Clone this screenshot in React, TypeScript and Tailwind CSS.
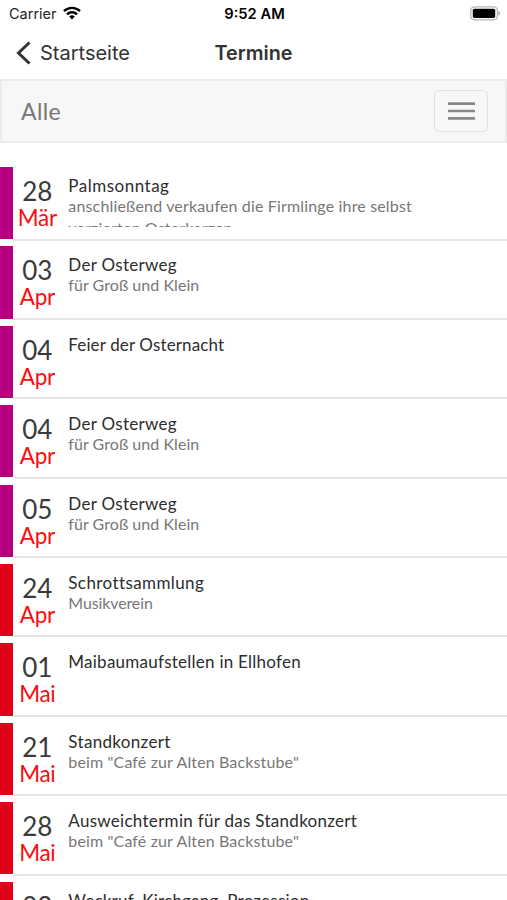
type Termin = {
  day: string;
  month: string;
  title: string;
  titleClass: string;
  text?: string;
  textClass?: string;
  bar: string;
};

const PURPLE = "bg-[#b5007f]";
const RED = "bg-[#e2001a]";

const termine: Termin[] = [
  { day: "28", month: "Mär", title: "Palmsonntag", titleClass: "tracking-[0.5px]", text: "anschließend verkaufen die Firmlinge ihre selbst verzierten Osterkerzen", textClass: "tracking-[0.16px]", bar: PURPLE },
  { day: "03", month: "Apr", title: "Der Osterweg", titleClass: "tracking-[0.3px]", text: "für Groß und Klein", textClass: "tracking-[0.05px]", bar: PURPLE },
  { day: "04", month: "Apr", title: "Feier der Osternacht", titleClass: "tracking-[0.13px]", bar: PURPLE },
  { day: "04", month: "Apr", title: "Der Osterweg", titleClass: "tracking-[0.3px]", text: "für Groß und Klein", textClass: "tracking-[0.05px]", bar: PURPLE },
  { day: "05", month: "Apr", title: "Der Osterweg", titleClass: "tracking-[0.3px]", text: "für Groß und Klein", textClass: "tracking-[0.05px]", bar: PURPLE },
  { day: "24", month: "Apr", title: "Schrottsammlung", titleClass: "tracking-[0.4px]", text: "Musikverein", textClass: "tracking-[-0.12px]", bar: RED },
  { day: "01", month: "Mai", title: "Maibaumaufstellen in Ellhofen", titleClass: "tracking-[0.25px]", bar: RED },
  { day: "21", month: "Mai", title: "Standkonzert", titleClass: "tracking-[0.33px]", text: 'beim "Café zur Alten Backstube"', textClass: "tracking-[0.14px]", bar: RED },
  { day: "28", month: "Mai", title: "Ausweichtermin für das Standkonzert", titleClass: "tracking-[0.29px]", text: 'beim "Café zur Alten Backstube"', textClass: "tracking-[0.14px]", bar: RED },
  { day: "03", month: "Jun", title: "Weckruf, Kirchgang, Prozession", titleClass: "tracking-[0.23px]", bar: RED },
];

function StatusBar() {
  return (
    <div className="grid h-7 shrink-0 grid-cols-3 items-center pl-[9px] pr-[6px] text-black">
      <div className="flex items-center gap-[6px]">
        <span className="text-[14.5px] leading-[18px] text-[#222]">Carrier</span>
        <svg className="-mt-[2px]" width="18" height="14" viewBox="0 0 18 14" fill="none" stroke="black" strokeWidth="2.4">
          <path d="M1 5.2a11.4 11.4 0 0 1 16 0" />
          <path d="M4 8.3a7.1 7.1 0 0 1 10 0" />
          <path d="M9 13.4 6.2 10.6a4 4 0 0 1 5.6 0Z" fill="black" stroke="none" />
        </svg>
      </div>
      <span className="-ml-px text-center text-[14.7px] font-semibold leading-[18px]">9:52 AM</span>
      <svg className="-mt-[2px] justify-self-end" width="31" height="15" viewBox="0 0 31 15">
        <rect x="0.8" y="0.8" width="26.6" height="13" rx="3.6" fill="white" stroke="#b5b5b5" strokeWidth="1.3" />
        <rect x="2.8" y="2.7" width="22.4" height="9.2" rx="1.6" fill="black" />
        <path d="M28.4 5v4.6c2.4-.8 2.4-3.8 0-4.6Z" fill="#a8a8a8" />
      </svg>
    </div>
  );
}

function Row({ item }: { item: Termin }) {
  return (
    <li className="flex h-[79.4px] shrink-0 items-start">
      <div className={`h-[72.3px] w-[13.3px] shrink-0 ${item.bar}`} />
      <div className="flex h-[73.5px] min-w-0 flex-1 border-b-2 border-[#e6e6e6]">
        <div className="w-[48px] shrink-0 pt-[10px] text-center">
          <div className="text-[26px] leading-[28px] text-[#3a3a3a]">{item.day}</div>
          <div className="text-[22.5px] leading-[25px] tracking-[-0.3px] text-[#fb0d0d]">{item.month}</div>
        </div>
        <div className="mt-[9px] h-[51px] w-[370px] overflow-hidden pl-[7px]">
          <div className={`whitespace-nowrap text-[17px] leading-[20px] text-[#2d2d2d] ${item.titleClass}`}>{item.title}</div>
          {item.text && <div className={`-mt-px text-[16px] leading-[21.5px] text-[#777] ${item.textClass}`}>{item.text}</div>}
        </div>
      </div>
    </li>
  );
}

export default function App() {
  return (
    <div className="flex h-[900px] w-[507px] flex-col overflow-hidden bg-white font-['Inter',sans-serif]">
      <StatusBar />
      <header className="grid h-[51px] shrink-0 grid-cols-3 items-center pb-[2px]">
        <a className="flex items-center gap-[8px] pl-[16px] text-[#333]">
          <svg width="16" height="24" viewBox="0 0 16 24" fill="none" stroke="#333" strokeWidth="3">
            <path d="M13.5 1.5 2.5 12l11 10.5" />
          </svg>
          <span className="text-[20px] leading-[26px]">Startseite</span>
        </a>
        <h1 className="text-center text-[19.8px] font-semibold leading-[26px] text-[#333]">Termine</h1>
      </header>
      <nav className="flex h-[64px] shrink-0 items-center justify-between border-2 border-[#ebebeb] bg-[#f7f7f7] pl-[19px] pr-[17px] font-['Lato',sans-serif]">
        <span className="text-[23px] leading-[28px] tracking-[0.4px] text-[#777]">Alle</span>
        <button className="flex h-[42px] w-[54px] items-center justify-center rounded-[5px] border-[1.5px] border-[#e2e2e2]">
          <svg width="27" height="18" viewBox="0 0 27 18" stroke="#888" strokeWidth="2.6">
            <path d="M0 1.6h27M0 9h27M0 16.4h27" />
          </svg>
        </button>
      </nav>
      <ul className="flex flex-col pt-[24px] font-['Lato',sans-serif]">
        {termine.map((item, i) => (
          <Row key={i} item={item} />
        ))}
      </ul>
    </div>
  );
}
